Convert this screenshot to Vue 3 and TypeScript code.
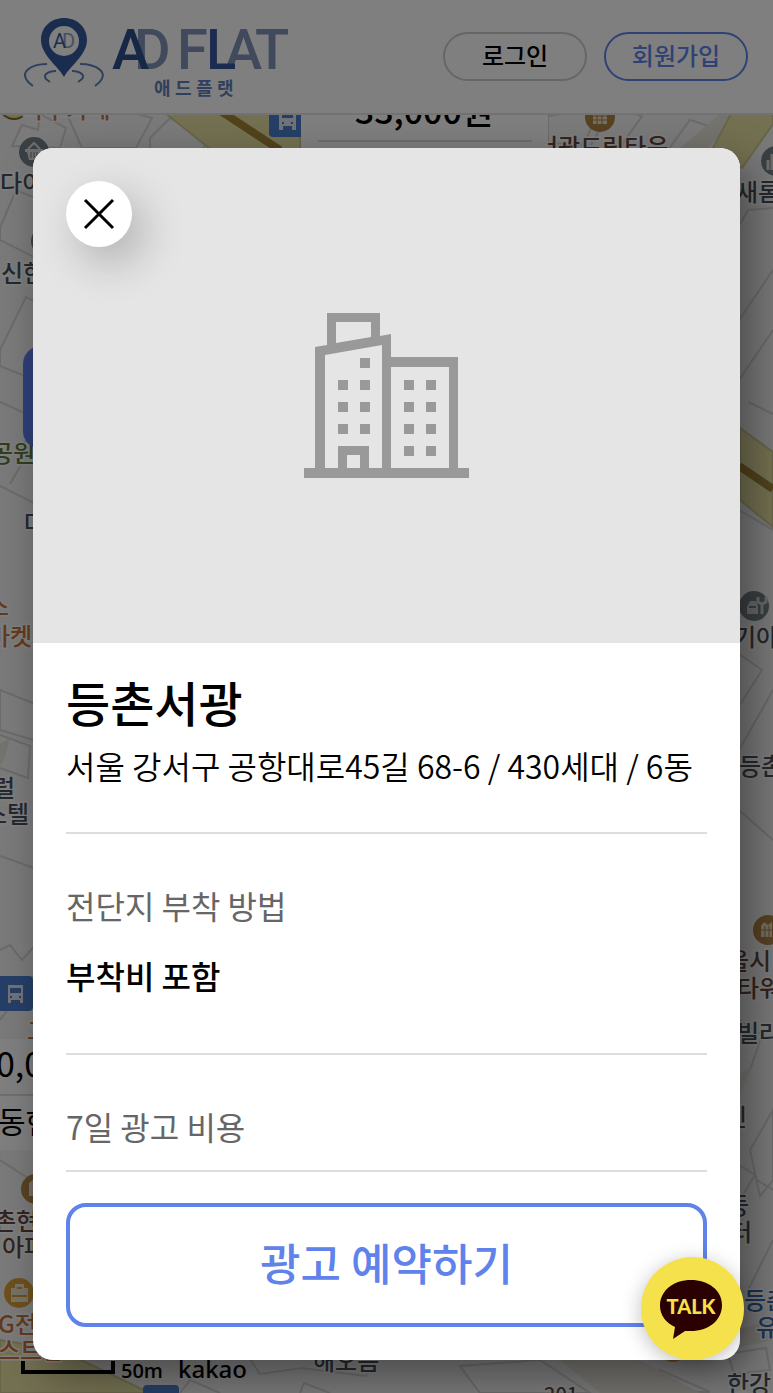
<script setup lang="ts">
import { ref } from 'vue'

interface MapLabel {
  text: string
  x: number
  y: number
  tone: string
  size?: number
}

const open = ref(true)

const labels: MapLabel[] = [
  { text: '마루카페', x: 22, y: 118, tone: 'orange' },
  { text: '다이소', x: 0, y: 192, tone: 'slate' },
  { text: '신한은행', x: 1, y: 282, tone: 'slate' },
  { text: '공원', x: -9, y: 462, tone: 'green' },
  { text: '마트', x: 24, y: 532, tone: 'slate' },
  { text: '스', x: -13, y: 615, tone: 'orange' },
  { text: '마켓', x: -12, y: 645, tone: 'orange' },
  { text: '럴', x: -7, y: 797, tone: 'slate' },
  { text: '스텔', x: -15, y: 823, tone: 'slate' },
  { text: '그린', x: 27, y: 1040, tone: 'orange' },
  { text: '촌현대', x: -6, y: 1230, tone: 'brown' },
  { text: '아파트', x: 2, y: 1256, tone: 'brown' },
  { text: 'G전자', x: -2, y: 1333, tone: 'orange' },
  { text: '스트샵', x: -2, y: 1359, tone: 'orange' },
  { text: '서광드림타운', x: 536, y: 156, tone: 'brown' },
  { text: '새롬', x: 736, y: 201, tone: 'slate' },
  { text: '기아', x: 734, y: 646, tone: 'slate' },
  { text: '등촌', x: 739, y: 775, tone: 'slate' },
  { text: '울시티', x: 727, y: 970, tone: 'brown' },
  { text: '타워', x: 737, y: 997, tone: 'brown' },
  { text: '빌라', x: 737, y: 1042, tone: 'slate' },
  { text: '인', x: 725, y: 1126, tone: 'brown' },
  { text: '등', x: 727, y: 1214, tone: 'slate' },
  { text: '터', x: 730, y: 1241, tone: 'slate' },
  { text: '등촌', x: 744, y: 1309, tone: 'blue' },
  { text: '유치원', x: 756, y: 1336, tone: 'blue' },
  { text: '한강', x: 727, y: 1393, tone: 'slate' },
  { text: '해오름', x: 313, y: 1370, tone: 'slate' },
  { text: '201', x: 544, y: 1402, tone: 'brown', size: 20 },
]

const windows: [number, number][] = [
  [360, 358],
  [338, 380], [360, 380], [404, 380], [426, 380],
  [338, 402], [360, 402], [404, 402], [426, 402],
  [338, 424], [360, 424], [404, 424], [426, 424],
  [404, 446], [426, 446],
]
</script>

<template>
  <div class="page">
    <svg class="map" viewBox="0 0 773 1393" preserveAspectRatio="xMinYMin slice" aria-hidden="true">
      <rect width="773" height="1393" fill="#f4f4f4" />
      <g fill="#f7f7f7" stroke="#d6d6d6" stroke-width="2">
        <path d="M12 146 22 125 38 130 40 114 66 128 60 148ZM66 112 82 148H136L152 118 130 112ZM150 138 170 118 208 140 200 154H150ZM0 228 16 190 40 200V260L0 240Z" />
        <path d="M0 350 26 297 40 304V382L0 366ZM0 402 40 420M18 452 34 430M10 484 24 460" />
        <path d="M0 486 40 506M0 690 40 706V742L0 730ZM0 735 30 746 28 778 0 768M0 856 40 870M0 950 10 945 22 960 40 940M0 1020 33 976M0 1160 34 1182" />
        <path d="M548 116 600 108 584 144H548ZM612 108 642 116 618 150H588ZM668 150 690 120 709 126 690 150Z" />
        <path d="M739 226 748 210 773 208M739 320 773 270M739 380 773 330M748 402 773 414M739 510 773 530M739 654 762 670 739 706M739 750 773 690M739 810 773 840M739 1020 762 1035 750 1070M750 1150 773 1110V1180L760 1196ZM739 1165 755 1175 742 1196M757 1180 773 1190M748 1290 773 1240" />
        <path d="M248 1356 260 1374 302 1368 366 1376 372 1360M300 1393 304 1383 330 1393M180 1393 190 1380 220 1393M460 1366 540 1360 590 1393H480ZM642 1384 660 1370 710 1392H636ZM728 1354 766 1348 770 1370 734 1374Z" />
      </g>
      <path d="M678 150 722 112H742L706 150ZM0 744 10 738 4 760 0 766ZM739 1075 752 1066 739 1096ZM560 1360 640 1360 700 1393H600ZM726 1333 773 1320V1340L726 1350Z" fill="#ebe6dc" />
      <path d="M164 112H300V152H214ZM712 150 732 112H773V124L742 168ZM740 428 773 452V527L740 500ZM0 1340 60 1350 150 1393H0Z" fill="#e9e2a4" stroke="#d3cb95" stroke-width="2" />
      <path d="M222 112 280 150M739 466 773 489" fill="none" stroke="#a5873a" stroke-width="8" />
      <g fill="#758186">
        <circle cx="34" cy="152" r="15" /><circle cx="46" cy="241" r="15" /><circle cx="776" cy="161" r="15" /><circle cx="754" cy="606" r="15" />
      </g>
      <g fill="#b08444">
        <circle cx="600" cy="117" r="15" /><circle cx="768" cy="930" r="15" /><circle cx="36" cy="1189" r="15" />
      </g>
      <circle cx="19" cy="1293" r="15" fill="#dda13d" />
      <circle cx="14" cy="104" r="15" fill="#f3e062" stroke="#776b3c" stroke-width="2" />
      <circle cx="673" cy="1347" r="15" fill="#dda13d" />
      <path d="M25 149H43V152H41L39 160H29L27 152H25Z" fill="#dedede" />
      <path d="M28 149 34 143 40 149" fill="none" stroke="#dedede" stroke-width="2" />
      <path d="M31 152V158M34 152V158M37 152V158" stroke="#758186" stroke-width="1" />
      <path d="M747 614V607L750 601H756L758 606V614Z" fill="#d2d2d2" />
      <path d="M762 614V603M758 597V602L762 604 766 602V597" fill="none" stroke="#d2d2d2" stroke-width="3" />
      <path d="M749 607H756" stroke="#758186" stroke-width="2" />
      <path d="M593 112H607V124H593ZM761 926 764 922 768 925 772 922V937H761ZM29 1183 34 1179V1196H29Z" fill="#eadfca" />
      <path d="M597 112V124M602 112V124M593 116H607M593 120H607M765 926V937M769 926V937M761 930H773" stroke="#b08444" stroke-width="1" />
      <path d="M768 160V170M772 154V170" stroke="#ddd" stroke-width="3" />
      <path d="M12 1289H27V1301H12ZM16 1289V1285H23V1289" fill="#efe6ce" stroke="#efe6ce" stroke-width="2" />
      <path d="M17 1288H22M12 1296H27" stroke="#dda13d" stroke-width="2" />
      <g fill="#4c7fd0">
        <rect x="269" y="96" width="40" height="41" rx="4" /><rect x="-6" y="976" width="39" height="35" rx="4" /><rect x="143" y="1385" width="36" height="30" rx="4" />
      </g>
      <path d="M279 110H296V130H292V126H283V130H279ZM8 985H23V1003H20V1000H11V1003H8Z" fill="#e3e7ee" />
      <path d="M282 113H293V118H282ZM10 988H21V993H10Z" fill="#4c7fd0" />
      <path d="M282 123H284M291 123H293M10 997H12M19 997H21" stroke="#4c7fd0" stroke-width="2" />
      <text
        v-for="label in labels"
        :key="label.text + label.y"
        :x="label.x"
        :y="label.y"
        :font-size="label.size ?? 24"
        :class="['label', label.tone]"
      >{{ label.text }}</text>
      <rect x="301" y="80" width="247" height="110" fill="#fff" />
      <text x="424" y="124" class="price" text-anchor="middle">33,000원</text>
      <path d="M318 141H532" stroke="#ddd" stroke-width="2" />
      <rect x="-100" y="1039" width="180" height="111" fill="#fff" />
      <text x="-4" y="1077" class="price light">0,000원</text>
      <path d="M-80 1095H60" stroke="#ddd" stroke-width="2" />
      <text x="-2" y="1133" class="place">동현</text>
      <rect x="23" y="346" width="90" height="103" rx="18" fill="#5f7ff0" />
      <path d="M23 1361V1372H113V1361" fill="none" stroke="#000" stroke-width="4" />
      <text x="121" y="1378" class="scale">50m</text>
      <text x="178" y="1378" class="credit">kakao</text>
    </svg>

    <header class="topbar">
      <a class="brand" href="#" aria-label="애드플랫">
        <svg width="266" height="84" viewBox="22 15 266 84" aria-hidden="true">
          <g fill="none" stroke="#627ebc" stroke-width="2">
            <path d="M33 86C14 72 33 64 47 64M95 86C114 72 94 64 80 64" />
            <path d="M50 82C38 75 50 71 56 71M78 82C90 75 78 71 72 71" />
          </g>
          <path d="M64 77C58 66 41 55 41 40C41 27 51 18 64 18C77 18 87 27 87 40C87 55 70 66 64 77Z" fill="#375b9f" />
          <circle cx="64" cy="41" r="15" fill="#fff" />
          <text y="48" class="pin-mark"><tspan x="62" fill="#8ba0c4">D</tspan><tspan x="53" fill="#375b9f">A</tspan></text>
          <text y="69" class="wordmark"><tspan x="134" fill="#8094b8">D</tspan><tspan x="112" fill="#2f508f">A</tspan><tspan x="177" fill="#8094b8">F</tspan><tspan x="225" fill="#8094b8">A</tspan><tspan x="206" fill="#3858a0">L</tspan><tspan x="255" fill="#8094b8">T</tspan></text>
          <text x="154 175 196 217" y="95" class="subtitle">애드플랫</text>
        </svg>
      </a>
      <nav class="actions">
        <button type="button" class="pill">로그인</button>
        <button type="button" class="pill primary">회원가입</button>
      </nav>
    </header>

    <div v-if="open" class="backdrop">
      <section class="dialog" role="dialog" aria-modal="true" aria-labelledby="place-name">
        <div class="photo">
          <button type="button" class="close" aria-label="닫기" @click="open = false">
            <svg width="32" height="32" viewBox="0 0 32 32" aria-hidden="true">
              <path d="M2 2 30 30M30 2 2 30" stroke="#000" stroke-width="3" fill="none" />
            </svg>
          </button>
          <svg class="building" viewBox="304 313 165 165" aria-hidden="true">
            <path d="M304 468H315V347L327 345V313H380V336L391 334V357H458V468H469V478H304ZM325 468H338V446H369V468H382V345L325 355ZM336 343 371 337V322H336ZM391 468H449V367H391ZM347 468H360V455H347Z" fill="#999" fill-rule="evenodd" />
            <rect v-for="[x, y] in windows" :key="`${x}-${y}`" :x="x" :y="y" width="10" height="10" fill="#999" />
          </svg>
        </div>

        <div class="summary">
          <h1 id="place-name">등촌서광</h1>
          <p>서울 강서구 공항대로45길 68-6 / 430세대 / 6동</p>
        </div>
        <div class="detail">
          <h2>전단지 부착 방법</h2>
          <p>부착비 포함</p>
        </div>
        <div class="cost">
          <h2>7일 광고 비용</h2>
        </div>
        <footer class="footer">
          <button type="button" class="reserve">광고 예약하기</button>
        </footer>
      </section>
    </div>

    <button type="button" class="talk" aria-label="카카오톡 상담">
      <svg viewBox="0 0 103 103" aria-hidden="true">
        <path d="M50 23C67 23 81 33 81 48C81 64 67 74 50 74H44L32 82L34 70C25 66 19 58 19 49C19 33 33 23 50 23Z" fill="#2b0000" />
        <text x="50" y="57" text-anchor="middle" class="talk-text">TALK</text>
      </svg>
    </button>
  </div>
</template>

<style>
body {
  margin: 0;
}
</style>

<style scoped>
.page {
  position: relative;
  min-height: 100vh;
  overflow: hidden;
  background: #f4f4f4;
  color: #000;
  font-family: "Noto Sans CJK KR", "Noto Sans", sans-serif;
}

.page * {
  box-sizing: border-box;
}

button {
  font-family: inherit;
  cursor: pointer;
}

.map {
  position: absolute;
  inset: 0;
  width: 100%;
  height: 100%;
}

.label {
  font-weight: 500;
  stroke: #fff;
  stroke-width: 3px;
  paint-order: stroke;
}

.slate { fill: #4b535e; }
.brown { fill: #66493c; }
.orange { fill: #c8743a; }
.green { fill: #5f7c3e; }
.blue { fill: #3c69aa; }

.price {
  font-size: 34px;
  font-weight: 500;
}

.price.light {
  font-weight: 400;
}

.place {
  font-size: 30px;
}

.scale {
  font-family: "Open Sans", sans-serif;
  font-size: 20px;
  font-weight: 600;
}

.credit {
  font-family: "Noto Sans", sans-serif;
  font-size: 24px;
  font-weight: 500;
}

.topbar {
  position: absolute;
  inset: 0 0 auto;
  display: flex;
  align-items: center;
  justify-content: space-between;
  padding: 0 25px 0 22px;
  height: 115px;
  border-bottom: 2px solid #e5e5e5;
  background: #fff;
}

.brand,
.brand svg {
  display: block;
}

.wordmark {
  font-family: Roboto, sans-serif;
  font-size: 56px;
  font-weight: 500;
}

.pin-mark {
  font-family: Roboto, sans-serif;
  font-size: 20px;
}

.subtitle {
  fill: #627ebc;
  font-size: 18px;
  font-weight: 700;
}

.actions {
  display: flex;
  gap: 17px;
}

.pill {
  width: 144px;
  height: 49px;
  padding: 0 0 4px;
  border: 2px solid #ccc;
  border-radius: 25px;
  background: #fff;
  color: #000;
  font-size: 24px;
  font-weight: 500;
  line-height: 36px;
}

.pill.primary {
  border-color: #5f83ea;
  color: #5f83ea;
}

.backdrop {
  position: relative;
  min-height: 100vh;
  padding: 148px 33px 33px;
  background: rgb(0 0 0 / 50%);
}

.dialog {
  border-radius: 20px;
  background: #fff;
  box-shadow: 12px 16px 44px rgb(0 0 0 / 40%);
}

.photo {
  position: relative;
  display: grid;
  place-items: center;
  aspect-ratio: 10 / 7;
  border-radius: 20px 20px 0 0;
  background: #e5e5e5;
}

.building {
  width: 165px;
  height: 165px;
}

.close {
  position: absolute;
  top: 33px;
  left: 33px;
  display: grid;
  place-items: center;
  width: 66px;
  height: 66px;
  padding: 0;
  border: 0;
  border-radius: 50%;
  background: #fff;
  box-shadow: 12px 16px 44px rgb(0 0 0 / 24%);
}

.summary,
.detail,
.cost,
.footer {
  margin: 0 33px;
}

h1,
h2,
p {
  margin: 0;
  line-height: 48px;
}

.summary {
  padding: 22px 0 43px;
}

h1 {
  font-size: 48px;
  font-weight: 500;
  line-height: 72px;
}

.summary p {
  margin-top: 4px;
  font-size: 32px;
  font-weight: 350;
  white-space: nowrap;
}

.detail,
.cost,
.footer {
  border-top: 2px solid #ddd;
}

.detail {
  padding: 47px 0 54px;
}

.detail p {
  margin-top: 22px;
  font-size: 32px;
  font-weight: 500;
}

h2 {
  color: #666;
  font-size: 32px;
  font-weight: 400;
}

.cost {
  padding: 47px 0 20px;
}

.footer {
  padding: 31px 0 33px;
}

.reserve {
  display: block;
  width: 100%;
  height: 124px;
  padding: 0 0 6px;
  border: 4px solid #5f83ea;
  border-radius: 20px;
  background: #fff;
  color: #5f83ea;
  font-size: 44px;
  font-weight: 500;
}

.talk {
  position: absolute;
  right: 29px;
  bottom: 33px;
  width: 103px;
  height: 103px;
  padding: 0;
  border: 0;
  border-radius: 50%;
  background: #f5e14b;
  box-shadow: 0 4px 20px rgb(0 0 0 / 25%);
}

.talk svg {
  display: block;
}

.talk-text {
  fill: #f5e14b;
  font-family: Lato, sans-serif;
  font-size: 20px;
  font-weight: 900;
}
</style>
